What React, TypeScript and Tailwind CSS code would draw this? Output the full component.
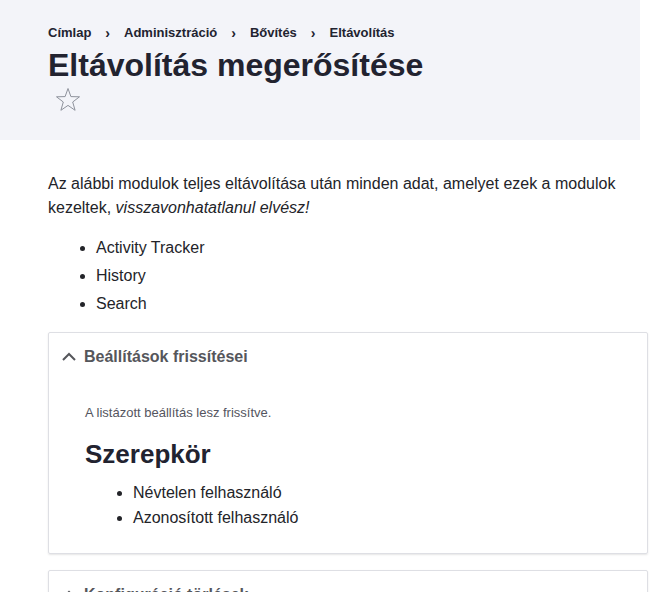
import React from "react";

const crumbs = ["Címlap", "Adminisztráció", "Bővítés", "Eltávolítás"];
const modules = ["Activity Tracker", "History", "Search"];
const roles = ["Névtelen felhasználó", "Azonosított felhasználó"];

function Chevron() {
  return (
    <svg width="16" height="16" viewBox="0 0 16 16" aria-hidden="true">
      <path d="M2 11 8 5l6 6" fill="none" stroke="#55565b" strokeWidth="2" />
    </svg>
  );
}

function StarOutline() {
  return (
    <svg width="26" height="26" viewBox="0 0 26 26" aria-hidden="true">
      <path
        d="M13 1.5 15.9 9.6 24.5 9.8 17.7 15 20.1 23.3 13 18.4 5.9 23.3 8.3 15 1.5 9.8 10.1 9.6Z"
        fill="none"
        stroke="#8e929c"
        strokeWidth="1"
      />
    </svg>
  );
}

export default function App() {
  return (
    <div className="min-h-[592px] w-[652px] overflow-hidden bg-white font-['Liberation_Sans',Arial,sans-serif] text-[#232429]">
      {/* Page header */}
      <header className="h-[140px] w-[640px] bg-[#f3f4f9] px-12 pt-[25px]">
        <nav aria-label="Breadcrumb">
          <ol className="flex items-center text-[13px] font-bold leading-[16px] text-[#222330]">
            {crumbs.map((crumb, i) => (
              <li key={crumb} className="flex items-center">
                {i > 0 ? <span className="mx-[14px] text-[14px]">›</span> : null}
                <span>{crumb}</span>
              </li>
            ))}
          </ol>
        </nav>
        <h1 className="mt-[4px] text-[32px] font-bold leading-[40px] text-[#222330]">
          Eltávolítás megerősítése
        </h1>
        <button className="ml-[7px] mt-[2px] block" aria-label="Kedvencekhez">
          <StarOutline />
        </button>
      </header>

      <main className="px-12 pt-[32px]">
        <p className="w-[580px] text-[16px] leading-[24px]">
          Az alábbi modulok teljes eltávolítása után minden adat, amelyet ezek a modulok kezeltek,{" "}
          <em>visszavonhatatlanul elvész!</em>
        </p>
        <ul className="mt-[14px] list-disc pl-12 text-[16px] leading-[28px]">
          {modules.map((m) => (
            <li key={m}>{m}</li>
          ))}
        </ul>

        <details open className="mt-[14px] w-[600px] rounded-[2px] border border-[#dedfe4] shadow-[0_1px_2px_rgba(0,0,0,0.1)]">
          <summary className="flex h-[47px] cursor-pointer list-none items-center gap-[7px] pl-[12px] pt-[1px] text-[16px] font-bold text-[#55565b]">
            <Chevron />
            Beállítások frissítései
          </summary>
          <div className="px-9 pb-[23px] pt-[24px]">
            <p className="text-[13px] leading-[18px] text-[#545560]">A listázott beállítás lesz frissítve.</p>
            <h3 className="mt-[16px] text-[26px] font-bold leading-[32px] text-[#222330]">Szerepkör</h3>
            <ul className="mt-[10px] list-disc pl-12 text-[16px] leading-[25px]">
              {roles.map((r) => (
                <li key={r}>{r}</li>
              ))}
            </ul>
          </div>
        </details>

        <details className="mt-[16px] w-[600px] rounded-[2px] border border-[#dedfe4] shadow-[0_1px_2px_rgba(0,0,0,0.1)]">
          <summary className="flex h-[47px] cursor-pointer list-none items-center gap-[7px] pl-[12px] pt-[1px] text-[16px] font-bold text-[#55565b]">
            <Chevron />
            Konfiguráció törlések
          </summary>
        </details>
      </main>
    </div>
  );
}
